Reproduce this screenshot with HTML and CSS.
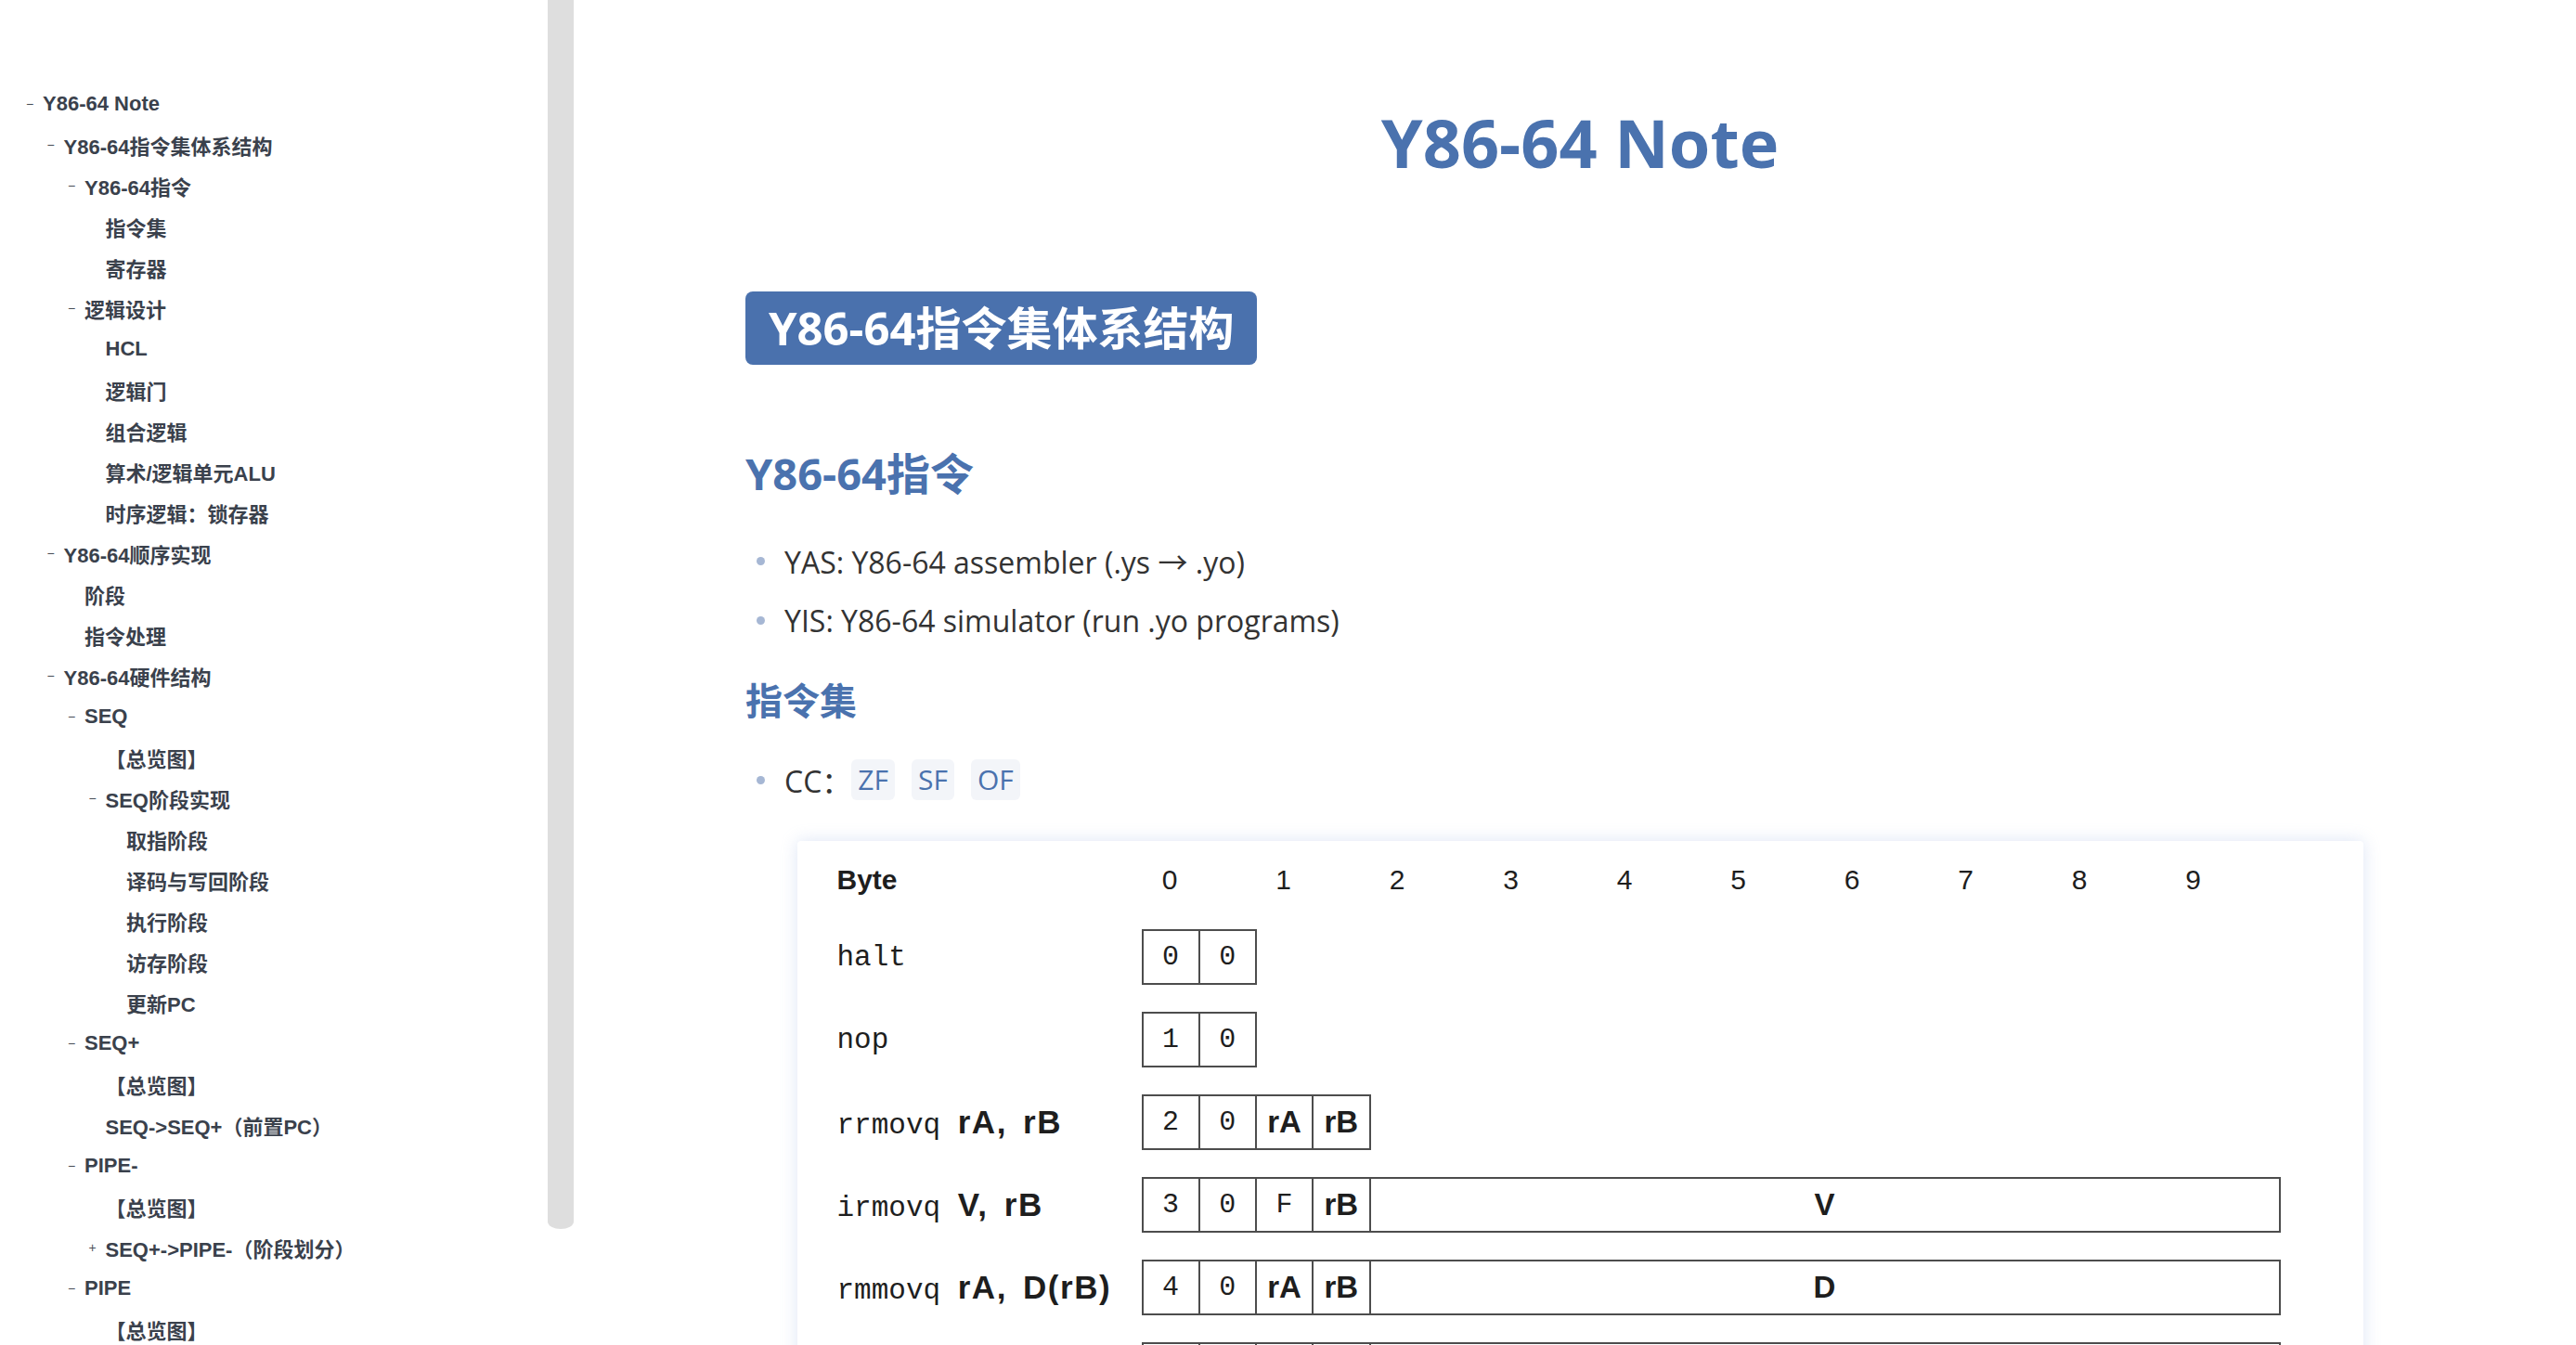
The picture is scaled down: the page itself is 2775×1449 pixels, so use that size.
FILE: index.html
```html
<!DOCTYPE html>
<html lang="zh-CN">
<head>
<meta charset="utf-8">
<title>Y86-64 Note</title>
<link rel="stylesheet" href="styles.css">
</head>
<body>
<aside class="sidebar">
  <nav class="toc">
    <ul>
      <li class="toc-item l0"><span class="tog">−</span><span class="lbl">Y86-64 Note</span></li>
      <li class="toc-item l1"><span class="tog">−</span><span class="lbl">Y86-64指令集体系结构</span></li>
      <li class="toc-item l2"><span class="tog">−</span><span class="lbl">Y86-64指令</span></li>
      <li class="toc-item l3"><span class="tog"></span><span class="lbl">指令集</span></li>
      <li class="toc-item l3"><span class="tog"></span><span class="lbl">寄存器</span></li>
      <li class="toc-item l2"><span class="tog">−</span><span class="lbl">逻辑设计</span></li>
      <li class="toc-item l3"><span class="tog"></span><span class="lbl">HCL</span></li>
      <li class="toc-item l3"><span class="tog"></span><span class="lbl">逻辑门</span></li>
      <li class="toc-item l3"><span class="tog"></span><span class="lbl">组合逻辑</span></li>
      <li class="toc-item l3"><span class="tog"></span><span class="lbl">算术/逻辑单元ALU</span></li>
      <li class="toc-item l3"><span class="tog"></span><span class="lbl">时序逻辑：锁存器</span></li>
      <li class="toc-item l1"><span class="tog">−</span><span class="lbl">Y86-64顺序实现</span></li>
      <li class="toc-item l2"><span class="tog"></span><span class="lbl">阶段</span></li>
      <li class="toc-item l2"><span class="tog"></span><span class="lbl">指令处理</span></li>
      <li class="toc-item l1"><span class="tog">−</span><span class="lbl">Y86-64硬件结构</span></li>
      <li class="toc-item l2"><span class="tog">−</span><span class="lbl">SEQ</span></li>
      <li class="toc-item l3"><span class="tog"></span><span class="lbl">【总览图】</span></li>
      <li class="toc-item l3"><span class="tog">−</span><span class="lbl">SEQ阶段实现</span></li>
      <li class="toc-item l4"><span class="tog"></span><span class="lbl">取指阶段</span></li>
      <li class="toc-item l4"><span class="tog"></span><span class="lbl">译码与写回阶段</span></li>
      <li class="toc-item l4"><span class="tog"></span><span class="lbl">执行阶段</span></li>
      <li class="toc-item l4"><span class="tog"></span><span class="lbl">访存阶段</span></li>
      <li class="toc-item l4"><span class="tog"></span><span class="lbl">更新PC</span></li>
      <li class="toc-item l2"><span class="tog">−</span><span class="lbl">SEQ+</span></li>
      <li class="toc-item l3"><span class="tog"></span><span class="lbl">【总览图】</span></li>
      <li class="toc-item l3"><span class="tog"></span><span class="lbl">SEQ-&gt;SEQ+（前置PC）</span></li>
      <li class="toc-item l2"><span class="tog">−</span><span class="lbl">PIPE-</span></li>
      <li class="toc-item l3"><span class="tog"></span><span class="lbl">【总览图】</span></li>
      <li class="toc-item l3"><span class="tog">+</span><span class="lbl">SEQ+-&gt;PIPE-（阶段划分）</span></li>
      <li class="toc-item l2"><span class="tog">−</span><span class="lbl">PIPE</span></li>
      <li class="toc-item l3"><span class="tog"></span><span class="lbl">【总览图】</span></li>
    </ul>
  </nav>
  <div class="scrolltrack"><div class="thumb"></div></div>
</aside>

<main class="main">
  <article class="content">
    <h1 class="title">Y86-64 Note</h1>
    <h2 class="badge">Y86-64指令集体系结构</h2>
    <h3 class="sec">Y86-64指令</h3>
    <ul class="bullets">
      <li>YAS: Y86-64 assembler (.ys → .yo)</li>
      <li>YIS: Y86-64 simulator (run .yo programs)</li>
    </ul>
    <h4 class="sub">指令集</h4>
    <ul class="bullets cc">
      <li>CC：<span class="chips"><code class="chip">ZF</code><code class="chip">SF</code><code class="chip">OF</code></span></li>
    </ul>

    <figure class="card">
      <div class="fhead">
        <div class="flabel byte">Byte</div>
        <span class="bnum">0</span><span class="bnum">1</span><span class="bnum">2</span><span class="bnum">3</span><span class="bnum">4</span>
        <span class="bnum">5</span><span class="bnum">6</span><span class="bnum">7</span><span class="bnum">8</span><span class="bnum">9</span>
      </div>
      <div class="frow">
        <div class="flabel"><span class="mono">halt</span></div>
        <div class="bytes"><span class="cell mono">0</span><span class="cell mono">0</span></div>
      </div>
      <div class="frow">
        <div class="flabel"><span class="mono">nop</span></div>
        <div class="bytes"><span class="cell mono">1</span><span class="cell mono">0</span></div>
      </div>
      <div class="frow">
        <div class="flabel"><span class="mono">rrmovq</span> <span class="reg">rA, rB</span></div>
        <div class="bytes"><span class="cell mono">2</span><span class="cell mono">0</span><span class="cell reg">rA</span><span class="cell reg">rB</span></div>
      </div>
      <div class="frow">
        <div class="flabel"><span class="mono">irmovq</span> <span class="reg">V, rB</span></div>
        <div class="bytes"><span class="cell mono">3</span><span class="cell mono">0</span><span class="cell mono">F</span><span class="cell reg">rB</span><span class="cell wide reg">V</span></div>
      </div>
      <div class="frow">
        <div class="flabel"><span class="mono">rmmovq</span> <span class="reg">rA, D(rB)</span></div>
        <div class="bytes"><span class="cell mono">4</span><span class="cell mono">0</span><span class="cell reg">rA</span><span class="cell reg">rB</span><span class="cell wide reg">D</span></div>
      </div>
      <div class="frow">
        <div class="flabel"><span class="mono">mrmovq</span> <span class="reg">D(rB), rA</span></div>
        <div class="bytes"><span class="cell mono">5</span><span class="cell mono">0</span><span class="cell reg">rA</span><span class="cell reg">rB</span><span class="cell wide reg">D</span></div>
      </div>
      <div class="frow">
        <div class="flabel"><span class="mono">OPq</span> <span class="reg">rA, rB</span></div>
        <div class="bytes"><span class="cell mono">6</span><span class="cell reg">fn</span><span class="cell reg">rA</span><span class="cell reg">rB</span></div>
      </div>
    </figure>
  </article>
</main>
</body>
</html>
```

FILE: styles.css
```css
html, body {
  margin: 0;
  padding: 0;
  height: 100%;
}

body {
  display: flex;
  height: 100vh;
  overflow: hidden;
  background: #ffffff;
  font-family: "Open Sans", "Noto Sans CJK SC", sans-serif;
  color: #333333;
}

/* ---------- sidebar ---------- */
.sidebar {
  flex: 0 0 618px;
  display: flex;
  height: 100vh;
  overflow: hidden;
}

.toc {
  flex: 1;
  padding-top: 90px;
}

.toc ul {
  list-style: none;
  margin: 0;
  padding: 0;
}

.toc-item {
  display: flex;
  align-items: center;
  height: 44px;
  font-family: "Liberation Sans", "Noto Sans CJK SC", sans-serif;
  font-weight: 700;
  font-size: 22px;
  color: #3a414c;
  white-space: nowrap;
}

.tog {
  flex: 0 0 18px;
  font-weight: 400;
  font-size: 14px;
  color: #4a4f58;
}

.l0 { padding-left: 28px; }
.l1 { padding-left: 50.5px; }
.l2 { padding-left: 73px; }
.l3 { padding-left: 95.5px; }
.l4 { padding-left: 118px; }

.scrolltrack {
  flex: 0 0 28px;
}

.thumb {
  height: 1324px;
  background: #dedede;
  border-radius: 0 0 14px 14px / 0 0 8px 8px;
}

/* ---------- main ---------- */
.main {
  flex: 1;
  padding-left: 185px;
}

.content {
  width: 1798px;
}

.title {
  margin: 110px 0 0;
  font-size: 72px;
  line-height: 86px;
  font-weight: 700;
  text-align: center;
  color: #4a72ae;
}

.badge {
  width: fit-content;
  margin: 118px 0 0;
  padding: 10px 25px;
  font-size: 49px;
  line-height: 59px;
  font-weight: 700;
  color: #ffffff;
  background: #4a71ad;
  border-radius: 8px;
}

.sec {
  margin: 86px 0 0;
  font-size: 47px;
  line-height: 62px;
  font-weight: 700;
  color: #4a72ae;
}

.sub {
  margin: 29px 0 0;
  font-size: 40px;
  line-height: 52px;
  font-weight: 700;
  color: #4a72ae;
}

.bullets {
  list-style: none;
  margin: 31px 0 0;
  padding: 0;
}

.bullets.cc {
  margin-top: 27px;
}

.bullets li {
  display: flex;
  align-items: center;
  height: 64px;
  font-size: 32px;
  color: #333333;
}

.bullets li::before {
  content: "";
  flex: 0 0 9px;
  height: 9px;
  border-radius: 50%;
  background: #a6b7d4;
  margin: 0 21.5px 0 11.5px;
}

.chips {
  display: flex;
  gap: 18px;
}

.chip {
  font-family: "Open Sans", sans-serif;
  font-size: 30px;
  line-height: 44px;
  padding: 0 7px;
  border-radius: 6px;
  background: #f3f5f9;
  color: #4a72ae;
}

/* ---------- figure card ---------- */
.card {
  width: 1687px;
  box-sizing: border-box;
  margin: 34px auto 0;
  padding: 18px 43px 40px;
  background: #ffffff;
  border-radius: 4px;
  box-shadow: 0 0 18px rgba(150, 175, 225, 0.32);
  color: #1e1e1e;
}

.fhead {
  display: flex;
  align-items: center;
  height: 48px;
}

.flabel {
  flex: 0 0 328px;
  white-space: nowrap;
  font-family: "Liberation Mono", monospace;
  font-size: 31px;
}

.byte {
  font-family: "Liberation Sans", sans-serif;
  font-weight: 700;
  font-size: 30px;
}

.bnum {
  width: 61.25px;
  margin-right: 61.25px;
  text-align: center;
  font-family: "Liberation Sans", sans-serif;
  font-size: 30px;
}

.frow {
  display: flex;
  align-items: center;
  margin-top: 29px;
}

.mono {
  font-family: "Liberation Mono", monospace;
  font-size: 30px;
}

.flabel .mono {
  font-size: 31px;
}

.reg {
  font-family: "Liberation Sans", sans-serif;
  font-weight: 700;
  font-size: 33px;
}

.flabel .reg {
  font-size: 35px;
  letter-spacing: 1.5px;
  word-spacing: 6px;
}

.bytes {
  display: flex;
  height: 60px;
  box-sizing: border-box;
  border: 2px solid #4d4d4d;
}

.cell {
  width: 59.25px;
  line-height: 56px;
  text-align: center;
}

.cell + .cell {
  border-left: 2px solid #4d4d4d;
}

.cell.wide {
  width: 978px;
}
```
